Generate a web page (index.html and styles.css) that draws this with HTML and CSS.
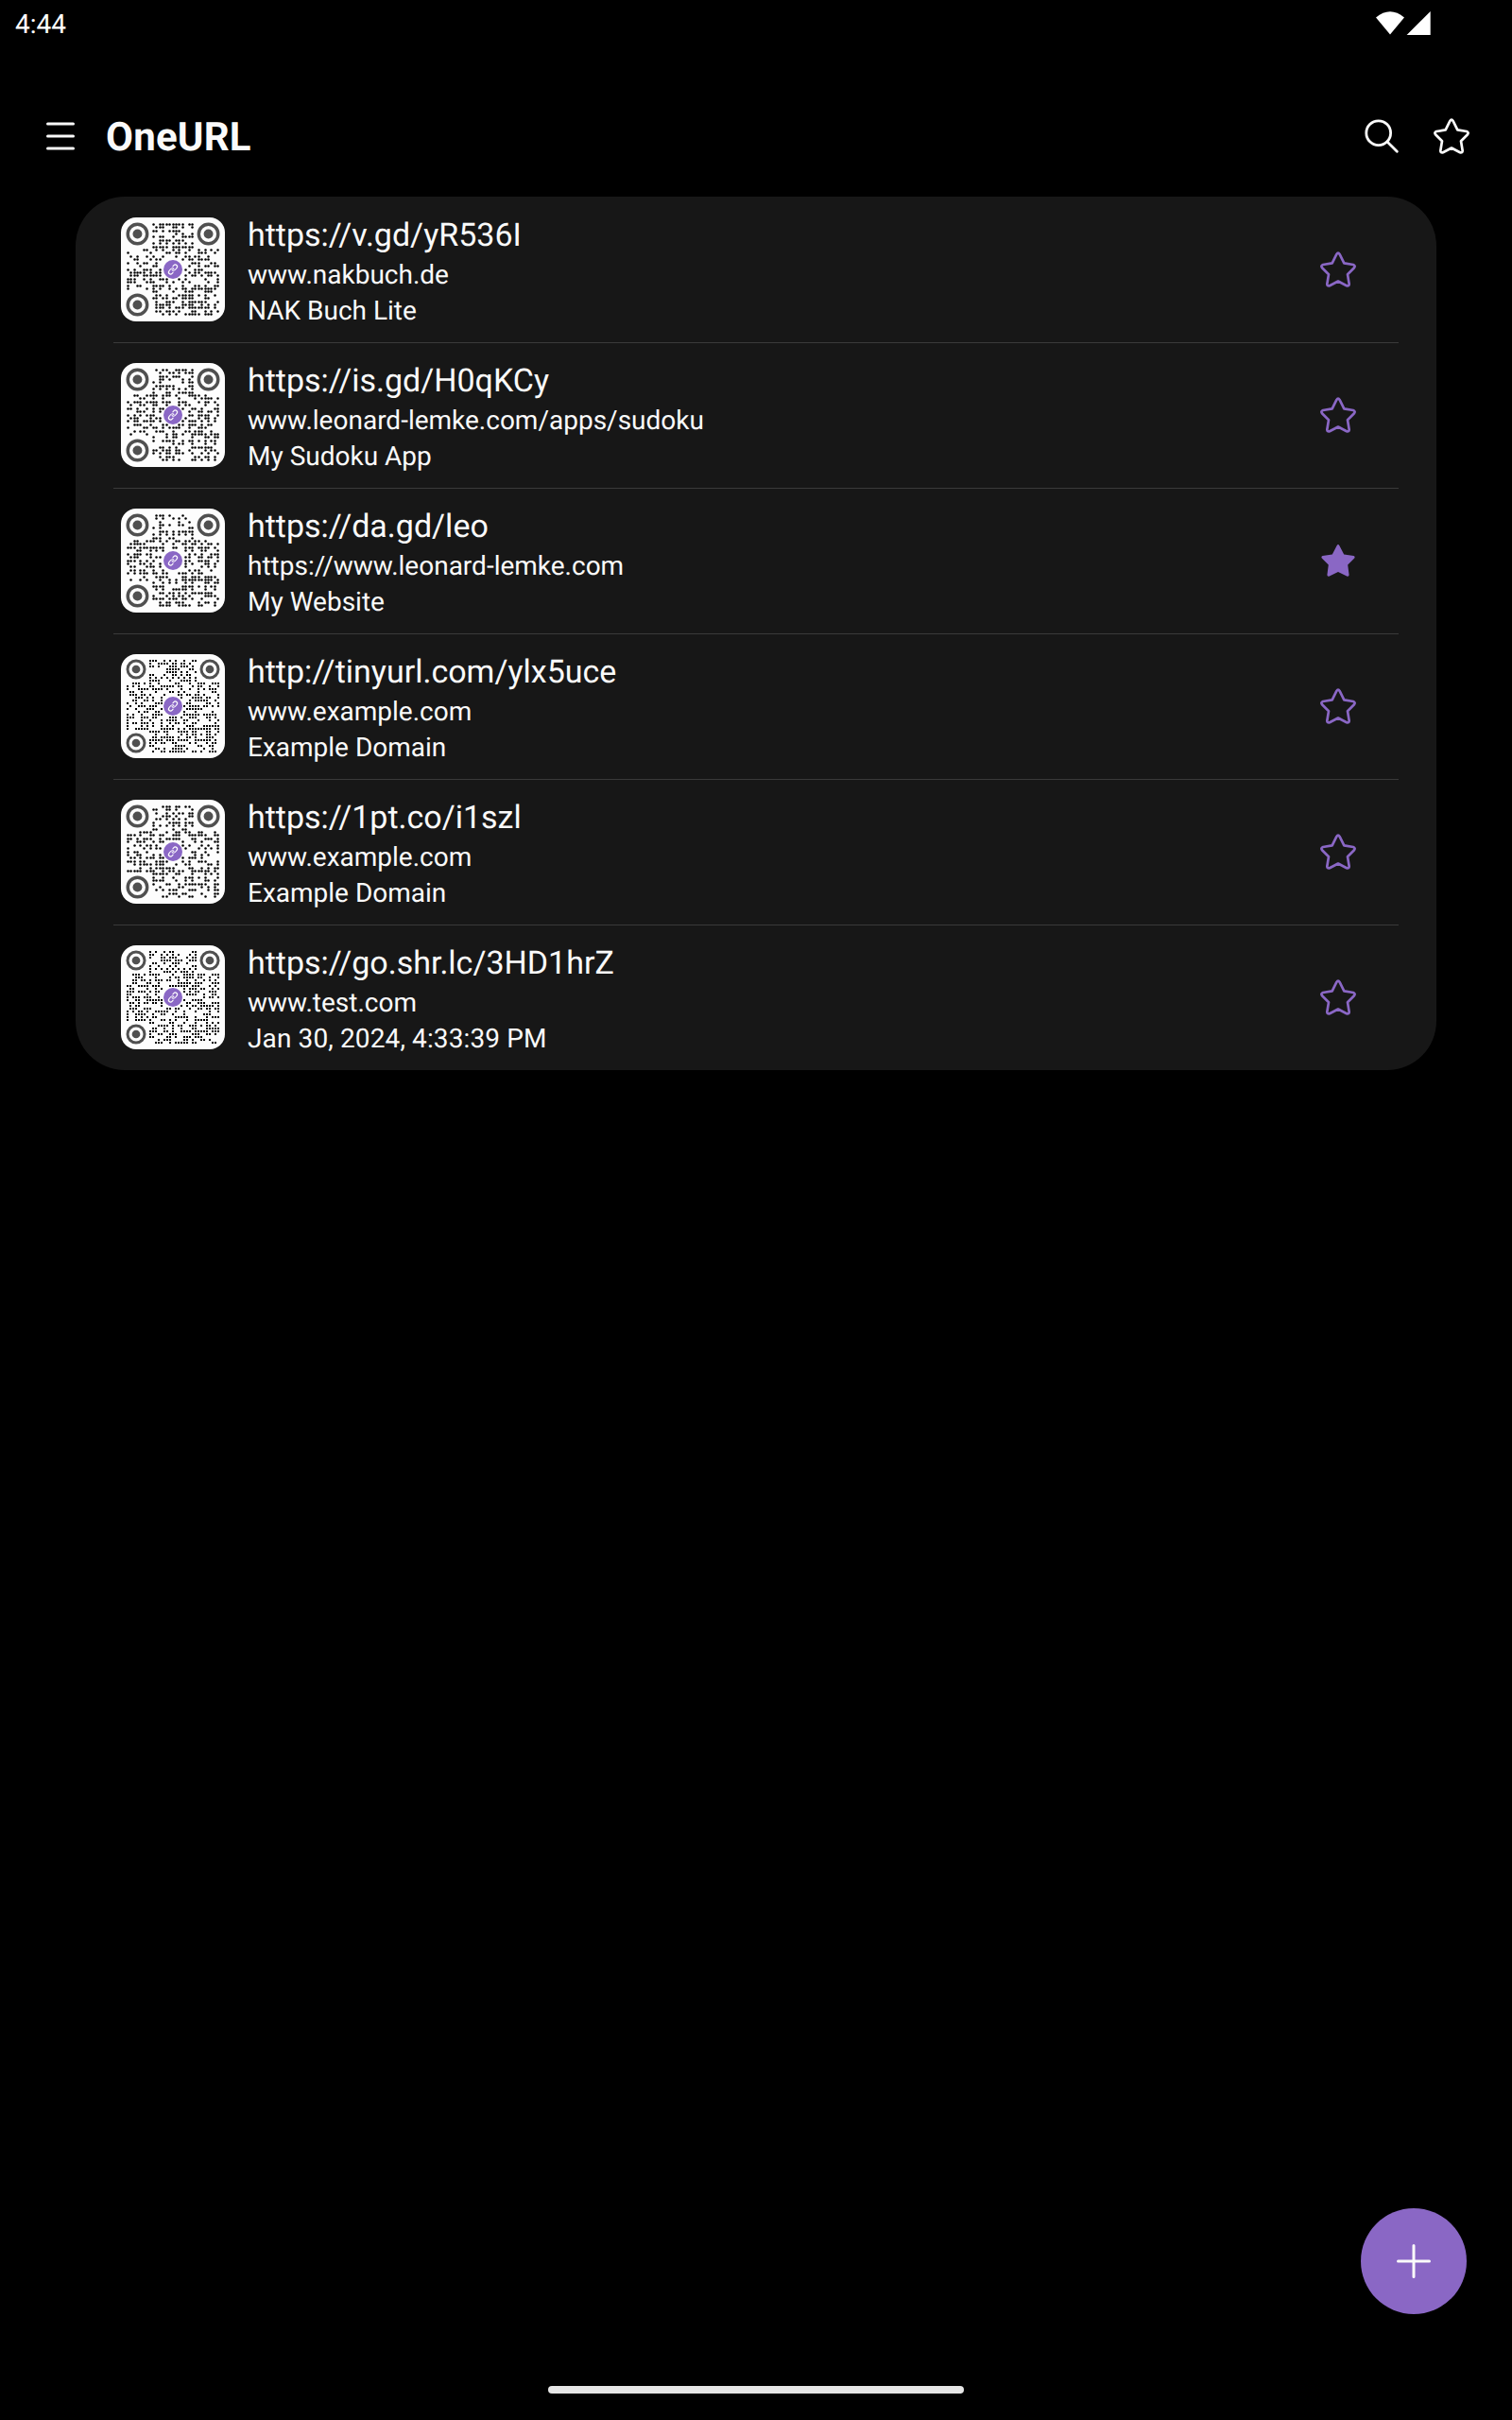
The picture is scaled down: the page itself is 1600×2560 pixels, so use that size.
FILE: index.html
```html
<!DOCTYPE html>
<html lang="en">
<head>
<meta charset="utf-8">
<title>OneURL</title>
<link rel="stylesheet" href="styles.css">
</head>
<body>
<svg class="defs" width="0" height="0" aria-hidden="true">
  <symbol id="star" viewBox="0 0 38 38">
    <path d="M17.4 2.9Q19 .5 20.6 2.9L25.3 12.4L35 14Q37.600 15 36 17.200L29 24.200L30.700 34.500Q30.600 37 28 36.300L19 31.500L10 36.300Q7.400 37 7.300 34.500L9 24.200L2 17.200Q.4 15 3 14L12.700 12.400Z" fill="none" stroke="currentColor" stroke-width="2.700" stroke-linejoin="round"/>
  </symbol>
  <symbol id="star-filled" viewBox="0 0 38 38">
    <path d="M17.600 3.300Q19 .8 20.400 3.300L25.200 12.600L35.500 14Q37.500 15 36 16.800L29.200 23.600L30.600 34.300Q30.300 36.400 28.200 35.500L19 31L9.800 35.500Q7.700 36.400 7.400 34.300L8.800 23.600L2 16.800Q.5 15 2.500 14L12.800 12.600Z" fill="currentColor"/>
  </symbol>
</svg>
<div class="screen">
  <div class="status">
    <span class="time">4:44</span>
    <svg class="signals" width="60" height="28" viewBox="0 0 60 28">
      <path d="M0 7.600Q15 -5 30 7.600L15 25.400Z" fill="#fff"/>
      <path d="M32.600 26L57.700 1V26Z" fill="#fff"/>
    </svg>
  </div>
  <header class="toolbar">
    <svg class="menu" width="32" height="32" viewBox="0 0 32 32"><path d="M2.500 3H29.500M2.500 16H29.500M2.500 29H29.500" stroke="#fafafa" stroke-width="3" stroke-linecap="round"/></svg>
    <h1>OneURL</h1>
    <svg class="search" width="36" height="36" viewBox="0 0 36 36" fill="none" stroke="#fafafa" stroke-width="2.800" stroke-linecap="round"><circle cx="14.700" cy="14.700" r="12.900"/><path d="M24 24L34.300 34.200"/></svg>
    <svg class="star" width="38" height="38"><use href="#star"/></svg>
  </header>
  <main class="list">
    <article class="item">
      <svg class="qr" viewBox="0 0 110 110" data-url="https://v.gd/yR536I"></svg>
      <div class="text"><h2>https://v.gd/yR536I</h2><p>www.nakbuch.de</p><p>NAK Buch Lite</p></div>
      <svg class="star accent" width="38" height="38"><use href="#star"/></svg>
    </article>
    <article class="item">
      <svg class="qr" viewBox="0 0 110 110" data-url="https://is.gd/H0qKCy"></svg>
      <div class="text"><h2>https://is.gd/H0qKCy</h2><p>www.leonard-lemke.com/apps/sudoku</p><p>My Sudoku App</p></div>
      <svg class="star accent" width="38" height="38"><use href="#star"/></svg>
    </article>
    <article class="item">
      <svg class="qr" viewBox="0 0 110 110" data-url="https://da.gd/leo"></svg>
      <div class="text"><h2>https://da.gd/leo</h2><p>https://www.leonard-lemke.com</p><p>My Website</p></div>
      <svg class="star accent" width="38" height="38"><use href="#star-filled"/></svg>
    </article>
    <article class="item">
      <svg class="qr" viewBox="0 0 110 110" data-url="http://tinyurl.com/ylx5uce"></svg>
      <div class="text"><h2>http://tinyurl.com/ylx5uce</h2><p>www.example.com</p><p>Example Domain</p></div>
      <svg class="star accent" width="38" height="38"><use href="#star"/></svg>
    </article>
    <article class="item">
      <svg class="qr" viewBox="0 0 110 110" data-url="https://1pt.co/i1szl"></svg>
      <div class="text"><h2>https://1pt.co/i1szl</h2><p>www.example.com</p><p>Example Domain</p></div>
      <svg class="star accent" width="38" height="38"><use href="#star"/></svg>
    </article>
    <article class="item">
      <svg class="qr" viewBox="0 0 110 110" data-url="https://go.shr.lc/3HD1hrZ"></svg>
      <div class="text"><h2>https://go.shr.lc/3HD1hrZ</h2><p>www.test.com</p><p class="date">Jan 30, 2024, 4:33:39 PM</p></div>
      <svg class="star accent" width="38" height="38"><use href="#star"/></svg>
    </article>
  </main>
  <button class="fab" aria-label="Add"><svg width="36" height="36" viewBox="0 0 36 36"><path d="M1.500 18H34.500M18 1.500V34.500" stroke="#fafafa" stroke-width="3" stroke-linecap="round"/></svg></button>
  <div class="gesture"></div>
</div>
<script src="qr.js"></script>
</body>
</html>
```
FILE: styles.css
```css
* { box-sizing: border-box; margin: 0; padding: 0; }
body { background: #000; color: #fafafa; font-family: Roboto, "Noto Sans", sans-serif; text-rendering: geometricPrecision; }
.defs { position: absolute; }
.screen { position: relative; width: 1600px; height: 2560px; display: flex; flex-direction: column; align-items: stretch; overflow: hidden; }
.status { height: 80px; padding: 9px 84px 0 16px; display: flex; justify-content: space-between; align-items: flex-start; }
.time { font-size: 28px; line-height: 33px; color: #fff; }
.signals { margin-top: 2px; }
.toolbar { height: 128px; padding: 0 45px 0 48px; display: flex; align-items: center; }
.toolbar h1 { flex: 1; margin-left: 32px; padding-top: 4px; font-size: 42px; line-height: 50px; font-weight: 700; letter-spacing: .2px; }
.search { margin: 0 37px 0 0; }
.star { flex: none; }
.accent { color: #8a67c5; }
.list { margin: 0 80px; background: #171717; border-radius: 52px; padding: 0 40px; }
.item { height: 154px; padding: 0 45px 0 8px; display: flex; align-items: center; }
.item + .item { background: linear-gradient(#3a3a3a, #3a3a3a) top / 100% 1px no-repeat; }
.qr { width: 110px; height: 110px; border-radius: 16px; background: #fdfdfd; flex: none; }
.text { flex: 1; align-self: flex-start; padding-top: 19px; margin-left: 24px; }
.text h2 { font-size: 34px; line-height: 45px; font-weight: 400; }
.text p { font-size: 28px; line-height: 38px; }
.text .date { letter-spacing: .12px; }
.fab { position: absolute; right: 48px; bottom: 112px; width: 112px; height: 112px; border: 0; border-radius: 50%; background: #8a67c5; display: flex; align-items: center; justify-content: center; }
.gesture { width: 440px; height: 8px; border-radius: 4px; background: #e6e6e6; margin: auto auto 28px; }
```
FILE: qr.js
```js
// Byte-mode QR codes at error correction level H, versions 3 and 4.
const SPEC = { 3: { data: 13, ec: 22, blocks: 2 }, 4: { data: 9, ec: 16, blocks: 4 } };

function mul(a, b) {
  let r = 0;
  for (; b; b >>= 1) { if (b & 1) r ^= a; a <<= 1; if (a & 256) a ^= 0x11d; }
  return r;
}

function parity(data, n) {
  let gen = [1], root = 1;
  for (let i = 0; i < n; i++) {
    const next = new Array(gen.length + 1).fill(0);
    gen.forEach((g, j) => { next[j] ^= g; next[j + 1] ^= mul(g, root); });
    gen = next;
    root = mul(root, 2);
  }
  const rem = data.concat(new Array(n).fill(0));
  for (let i = 0; i < data.length; i++) {
    const f = rem[i];
    gen.forEach((g, j) => { rem[i + j] ^= mul(g, f); });
  }
  return rem.slice(data.length);
}

function codewords(text, spec) {
  const total = spec.data * spec.blocks;
  let bits = '0100' + text.length.toString(2).padStart(8, '0');
  for (const c of text) bits += c.charCodeAt(0).toString(2).padStart(8, '0');
  bits += '0000';
  const bytes = bits.match(/.{8}/g).map(b => parseInt(b, 2));
  for (let pad = 0xec; bytes.length < total; pad ^= 0xec ^ 0x11) bytes.push(pad);
  const blocks = [], checks = [], out = [];
  for (let i = 0; i < spec.blocks; i++) {
    blocks.push(bytes.slice(i * spec.data, (i + 1) * spec.data));
    checks.push(parity(blocks[i], spec.ec));
  }
  for (let i = 0; i < spec.data; i++) blocks.forEach(b => out.push(b[i]));
  for (let i = 0; i < spec.ec; i++) checks.forEach(b => out.push(b[i]));
  return out;
}

const MASKS = [
  (x, y) => (x + y) % 2, (x, y) => y % 2, (x, y) => x % 3, (x, y) => (x + y) % 3,
  (x, y) => ((y >> 1) + Math.floor(x / 3)) % 2, (x, y) => x * y % 2 + x * y % 3,
  (x, y) => (x * y % 2 + x * y % 3) % 2, (x, y) => ((x + y) % 2 + x * y % 3) % 2
];

function build(words, version, mask) {
  const n = 17 + 4 * version;
  const m = Array.from({ length: n }, () => new Array(n).fill(-1));
  const finder = (cx, cy) => {
    for (let dy = -4; dy <= 4; dy++) for (let dx = -4; dx <= 4; dx++) {
      const x = cx + dx, y = cy + dy, d = Math.max(Math.abs(dx), Math.abs(dy));
      if (x >= 0 && y >= 0 && x < n && y < n) m[y][x] = d !== 2 && d !== 4 ? 1 : 0;
    }
  };
  finder(3, 3); finder(n - 4, 3); finder(3, n - 4);
  for (let i = 8; i < n - 8; i++) m[6][i] = m[i][6] = 1 - i % 2;
  for (let dy = -2; dy <= 2; dy++) for (let dx = -2; dx <= 2; dx++)
    m[n - 7 + dy][n - 7 + dx] = Math.max(Math.abs(dx), Math.abs(dy)) !== 1 ? 1 : 0;

  const value = 16 | mask;
  let rem = value;
  for (let i = 0; i < 10; i++) rem = (rem << 1) ^ ((rem >> 9) * 0x537);
  const fmt = (value << 10 | rem) ^ 0x5412;
  const bit = i => fmt >> i & 1;
  for (let i = 0; i <= 5; i++) m[i][8] = bit(i);
  m[7][8] = bit(6); m[8][8] = bit(7); m[8][7] = bit(8);
  for (let i = 9; i < 15; i++) m[8][14 - i] = bit(i);
  for (let i = 0; i < 8; i++) m[8][n - 1 - i] = bit(i);
  for (let i = 8; i < 15; i++) m[n - 15 + i][8] = bit(i);
  m[n - 8][8] = 1;

  let k = 0, up = true;
  for (let right = n - 1; right > 0; right -= 2, up = !up) {
    if (right === 6) right = 5;
    for (let v = 0; v < n; v++) for (let j = 0; j < 2; j++) {
      const x = right - j, y = up ? n - 1 - v : v;
      if (m[y][x] !== -1) continue;
      const b = k < words.length * 8 ? words[k >> 3] >> (7 - (k & 7)) & 1 : 0;
      m[y][x] = b ^ (MASKS[mask](x, y) === 0 ? 1 : 0);
      k++;
    }
  }
  return m;
}

function penalty(m) {
  const n = m.length;
  let p = 0, dark = 0;
  const lines = m.map(r => r.join('')).concat(m.map((_, i) => m.map(r => r[i]).join('')));
  for (const line of lines) {
    for (const run of line.match(/0{5,}|1{5,}/g) || []) p += run.length - 2;
    for (let i = 0; i + 7 <= n; i++) {
      if (line.slice(i, i + 7) !== '1011101') continue;
      const before = line.slice(Math.max(0, i - 4), i), after = line.slice(i + 7, i + 11);
      if (!before.includes('1') || !after.includes('1')) p += 40;
    }
  }
  for (let y = 0; y < n; y++) for (let x = 0; x < n; x++) {
    dark += m[y][x];
    if (x && y && m[y][x] === m[y - 1][x] && m[y][x] === m[y][x - 1] && m[y][x] === m[y - 1][x - 1]) p += 3;
  }
  return p + Math.floor(Math.abs(dark * 2 - n * n) * 10 / (n * n)) * 10;
}

function draw(svg) {
  const text = svg.dataset.url, version = text.length > 24 ? 4 : 3, n = 17 + 4 * version;
  const words = codewords(text, SPEC[version]);
  let best = null, low = Infinity;
  for (let i = 0; i < 8; i++) {
    const m = build(words, version, i), p = penalty(m);
    if (p < low) { low = p; best = m; }
  }
  const size = 99, pitch = size / n, origin = 5.5;
  let dots = '';
  for (let y = 0; y < n; y++) for (let x = 0; x < n; x++) {
    const corner = (x < 7 || x >= n - 7) && y < 7 || x < 7 && y >= n - 7;
    const cx = origin + (x + .5) * pitch, cy = origin + (y + .5) * pitch;
    if (corner || !best[y][x] || Math.hypot(cx - 55, cy - 55) < 12) continue;
    dots += version === 4
      ? `<rect x="${Math.round(cx - 1)}" y="${Math.round(cy - 1)}" width="2" height="2"/>`
      : `<circle cx="${Math.floor(cx) + .5}" cy="${Math.floor(cy) + .5}" r="1.25"/>`;
  }
  const eye = (x, y) => {
    const cx = origin + x * pitch, cy = origin + y * pitch;
    return `<circle cx="${cx}" cy="${cy}" r="${pitch * 3}" fill="none" stroke="#505050" stroke-width="${pitch}"/>` +
      `<circle cx="${cx}" cy="${cy}" r="${pitch * 1.45}" fill="#505050"/>`;
  };
  svg.innerHTML = dots + eye(3.5, 3.5) + eye(n - 3.5, 3.5) + eye(3.5, n - 3.5) +
    `<circle cx="55" cy="55" r="10" fill="#8a67c5"/>` +
    `<g transform="translate(55 55) rotate(-50) scale(.5 .42) rotate(45) translate(-12 -12)" fill="none" stroke="#fff" stroke-width="2.600" stroke-linecap="round">` +
    `<path d="M10 13a5 5 0 0 0 7.540 .54l3-3a5 5 0 0 0-7.070-7.070l-1.720 1.710M14 11a5 5 0 0 0-7.540-.54l-3 3a5 5 0 0 0 7.070 7.070l1.710-1.710"/></g>`;
}

document.querySelectorAll('.qr').forEach(draw);
```
